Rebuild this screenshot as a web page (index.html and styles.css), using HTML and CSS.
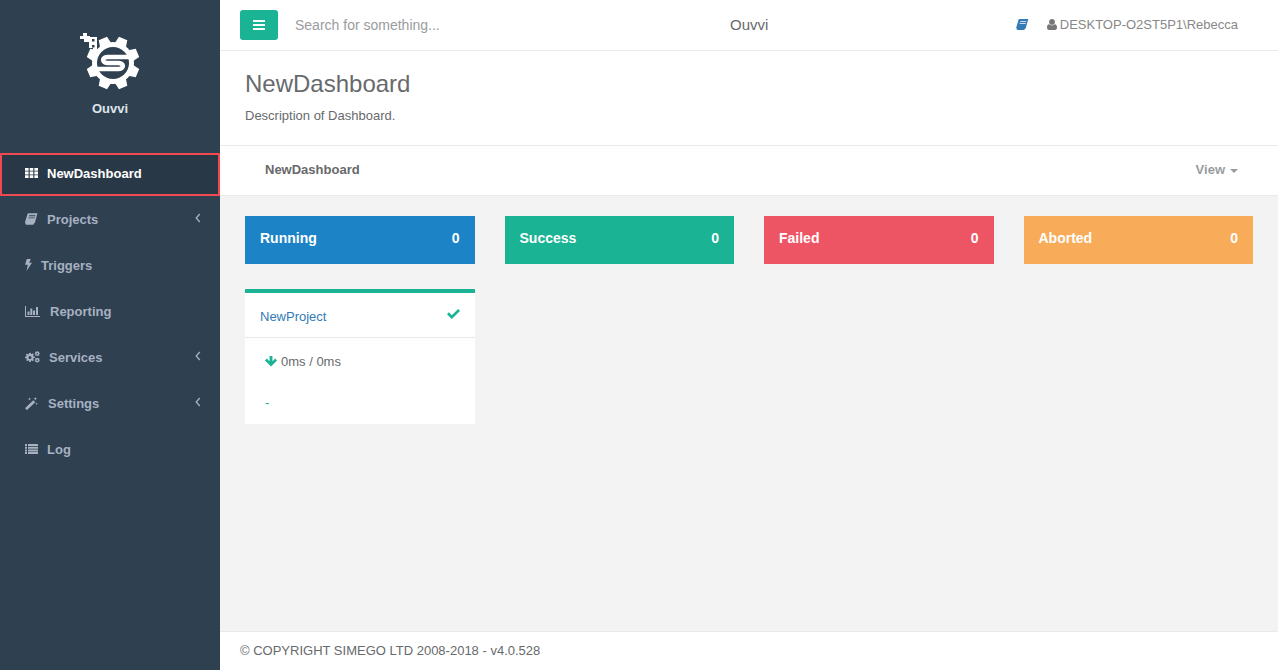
FILE: index.html
```html
<!DOCTYPE html>
<html lang="en">
<head>
<meta charset="utf-8">
<title>Ouvvi</title>
<link rel="stylesheet" href="styles.css">
</head>
<body>
<svg class="defs" width="0" height="0" aria-hidden="true">
  <defs>
    <symbol id="i-book" viewBox="0 0 16 14"><path d="M4 0h11.500l-.6 1.500-2.600 9.700c-.2.800-.7 1.300-1.600 1.300H1.800C.7 12.500 0 11.700.1 10.600c0-.5.2-1 .4-1.400L3 1C3.300.4 3.500 0 4 0zM5.300 2.500l-.3 1h7.500l.3-1zM4.500 5l-.3 1H12l.3-1zM1.900 11.100c-.3.500.1.900.7.900h8.500l-.3 1.100c-.1.500-.5.900-1.100.900H2.200C.9 14 .2 13 .4 11.800z"/></symbol>
    <symbol id="i-cog" viewBox="-10 -10 20 20"><path fill-rule="evenodd" d="M-1.500-10h3l.5 2.700 1.400.6 2.300-1.600 2.100 2.100-1.600 2.300.6 1.400 2.700.5v3l-2.700.5-.6 1.400 1.600 2.300-2.100 2.100-2.300-1.600-1.400.6-.5 2.700h-3l-.5-2.700-1.400-.6-2.300 1.600-2.100-2.100 1.600-2.300-.6-1.400L-10 1.500v-3l2.700-.5.6-1.400-1.600-2.300 2.100-2.100 2.300 1.600 1.400-.6zM0-3a3 3 0 1 0 0 6 3 3 0 1 0 0-6z"/></symbol>
  </defs>
</svg>
<div class="app">
  <aside class="sidebar">
    <div class="brand">
      <svg class="logo" viewBox="0 0 64 62" aria-hidden="true">
        <g fill="#fff">
          <g transform="translate(35 35)">
            <circle r="21"/>
            <g transform="rotate(22.5)">
              <path d="M-6-19L-4.500-26.500H4.500L6-19z"/>
              <path d="M-6-19L-4.500-26.500H4.500L6-19z" transform="rotate(45)"/>
              <path d="M-6-19L-4.500-26.500H4.500L6-19z" transform="rotate(90)"/>
              <path d="M-6-19L-4.500-26.500H4.500L6-19z" transform="rotate(135)"/>
              <path d="M-6-19L-4.500-26.500H4.500L6-19z" transform="rotate(180)"/>
              <path d="M-6-19L-4.500-26.500H4.500L6-19z" transform="rotate(225)"/>
              <path d="M-6-19L-4.500-26.500H4.500L6-19z" transform="rotate(270)"/>
              <path d="M-6-19L-4.500-26.500H4.500L6-19z" transform="rotate(315)"/>
            </g>
            <circle r="16" fill="#2f4050"/>
            <path class="logo-s" d="M17-6H-5C-11.500-6-11.500 0-5 0H5C11.500 0 11.500 6 5 6H-17"/>
          </g>
          <path d="M5 5h4v3h3v1h7v14h-4v-3h-4v-6H6v-3H2V8h3z"/>
        </g>
        <g fill="#2f4050"><rect x="14" y="11" width="2.500" height="2.500"/><rect x="14" y="17" width="2.500" height="2.500"/></g>
      </svg>
      <div class="brand-name">Ouvvi</div>
    </div>
    <nav>
      <ul class="menu">
        <li class="menu-item active"><a class="menu-link" href="#">
          <svg class="ico ico-th" viewBox="0 0 13 10" aria-hidden="true"><path d="M0 0h3.600v2.800H0zM4.700 0h3.600v2.800H4.700zM9.400 0H13v2.800H9.400zM0 3.600h3.600v2.800H0zM4.700 3.600h3.600v2.800H4.700zM9.400 3.600H13v2.800H9.400zM0 7.200h3.600V10H0zM4.700 7.200h3.600V10H4.700zM9.400 7.200H13V10H9.400z"/></svg>
          <span class="gap-th">NewDashboard</span></a></li>
        <li class="menu-item"><a class="menu-link" href="#">
          <svg class="ico ico-book"><use href="#i-book"/></svg>
          <span class="gap-book">Projects</span>
          <svg class="chev" viewBox="0 0 6 10" aria-hidden="true"><path d="M4.800 1L1.200 5l3.600 4" fill="none" stroke="currentColor" stroke-width="1.300"/></svg></a></li>
        <li class="menu-item"><a class="menu-link" href="#">
          <svg class="ico ico-bolt" viewBox="0 0 7 12" aria-hidden="true"><path d="M1.800 0h4L4.200 3.700H7L1.500 12l1.300-6.300H0z"/></svg>
          <span class="gap-bolt">Triggers</span></a></li>
        <li class="menu-item"><a class="menu-link" href="#">
          <svg class="ico ico-chart" viewBox="0 0 15 11" aria-hidden="true"><path d="M0 0h1v10h14v1H0zM2.500 5.500h2V9h-2zM5.300 2.500h2V9h-2zM8 4.500h2V9H8zM11 1h2v8h-2z"/></svg>
          <span class="gap-chart">Reporting</span></a></li>
        <li class="menu-item"><a class="menu-link" href="#">
          <svg class="ico ico-cogs" viewBox="0 0 15 12" aria-hidden="true"><svg x="0" y="1.500" width="10" height="10" viewBox="-10 -10 20 20"><use href="#i-cog" x="-10" y="-10" width="20" height="20"/></svg><svg x="9.500" y="0" width="5.500" height="5.500" viewBox="-10 -10 20 20"><use href="#i-cog" x="-10" y="-10" width="20" height="20"/></svg><svg x="9.500" y="6.500" width="5.500" height="5.500" viewBox="-10 -10 20 20"><use href="#i-cog" x="-10" y="-10" width="20" height="20"/></svg></svg>
          <span class="gap-cogs">Services</span>
          <svg class="chev" viewBox="0 0 6 10" aria-hidden="true"><path d="M4.800 1L1.200 5l3.600 4" fill="none" stroke="currentColor" stroke-width="1.300"/></svg></a></li>
        <li class="menu-item"><a class="menu-link" href="#">
          <svg class="ico ico-wand" viewBox="0 0 13 13" aria-hidden="true"><path d="M0 11.200L8.300 3.200l2 2L2 13zM10.300 0l.6 1.300 1.300.5-1.300.5-.6 1.300-.5-1.300-1.300-.5 1.300-.5zM4.500.5l.5 1.100 1.100.4-1.100.5-.5 1.100-.4-1.100L3 2l1.100-.4zM11.500 5.500l.4.9.9.4-.9.4-.4.900-.4-.9-.9-.4.900-.4z"/></svg>
          <span class="gap-wand">Settings</span>
          <svg class="chev" viewBox="0 0 6 10" aria-hidden="true"><path d="M4.800 1L1.200 5l3.600 4" fill="none" stroke="currentColor" stroke-width="1.300"/></svg></a></li>
        <li class="menu-item"><a class="menu-link" href="#">
          <svg class="ico ico-list" viewBox="0 0 13 10" aria-hidden="true"><path d="M0 0h2v2H0zM3 0h10v2H3zM0 2.700h2v2H0zM3 2.700h10v2H3zM0 5.400h2v2H0zM3 5.400h10v2H3zM0 8h2v2H0zM3 8h10v2H3z"/></svg>
          <span class="gap-th">Log</span></a></li>
      </ul>
    </nav>
  </aside>
  <div class="main">
    <header class="topbar">
      <button class="toggle" type="button" aria-label="Toggle menu">
        <svg viewBox="0 0 12 10" aria-hidden="true"><path d="M0 0h12v2H0zM0 4h12v2H0zM0 8h12v2H0z"/></svg>
      </button>
      <input class="search" type="text" placeholder="Search for something...">
      <div class="top-title">Ouvvi</div>
      <div class="top-links">
        <svg class="top-book"><use href="#i-book"/></svg>
        <span class="user">
          <svg class="top-user" viewBox="0 0 10 11" aria-hidden="true"><path d="M5 0a2.900 2.900 0 1 1 0 5.800A2.900 2.900 0 0 1 5 0zM2 5.300C2.800 6 3.800 6.500 5 6.500s2.200-.5 3-1.200c1.300.2 2 1.300 2 3.200 0 1.500-.8 2.500-2 2.500H2c-1.200 0-2-1-2-2.500 0-1.900.7-3 2-3.200z"/></svg>
          DESKTOP-O2ST5P1\Rebecca
        </span>
      </div>
    </header>
    <section class="page-heading">
      <h2 class="page-title">NewDashboard</h2>
      <p class="page-desc">Description of Dashboard.</p>
    </section>
    <div class="subnav">
      <a class="subnav-link" href="#">NewDashboard</a>
      <a class="subnav-view" href="#">View<span class="caret"></span></a>
    </div>
    <main class="content">
      <div class="grid tiles">
        <div class="tile tile-blue"><span>Running</span><span>0</span></div>
        <div class="tile tile-green"><span>Success</span><span>0</span></div>
        <div class="tile tile-red"><span>Failed</span><span>0</span></div>
        <div class="tile tile-orange"><span>Aborted</span><span>0</span></div>
      </div>
      <div class="grid">
        <article class="card">
          <div class="card-head">
            <a class="card-link" href="#">NewProject</a>
            <svg class="check" viewBox="0 0 13 10" aria-hidden="true"><path d="M4.800 10L0 5.200l1.900-1.900 2.900 2.900L11.100 0 13 1.900z"/></svg>
          </div>
          <div class="card-body">
            <div class="timing">
              <svg class="arrow" viewBox="0 0 12 11" aria-hidden="true"><path d="M4.600 0h2.800v5.300l2.800-2.800L12 4.400 6 10.600 0 4.400l1.800-1.900 2.800 2.800z"/></svg>
              0ms / 0ms
            </div>
            <div class="dash">-</div>
          </div>
        </article>
      </div>
    </main>
    <footer class="footer">© COPYRIGHT SIMEGO LTD 2008-2018 - v4.0.528</footer>
  </div>
</div>
</body>
</html>
```

FILE: styles.css
```css
* { box-sizing: border-box; }
html, body { height: 100%; }
body {
  margin: 0;
  font-family: "Liberation Sans", Arial, sans-serif;
  font-size: 13px;
  color: #676a6c;
  background: #2f4050;
}
a { text-decoration: none; }
.defs { display: block; height: 0; width: 0; overflow: hidden; }
.app { display: flex; height: 670px; overflow: hidden; }

.sidebar { width: 220px; flex: none; background: #2f4050; }
.brand { height: 150px; display: flex; flex-direction: column; align-items: center; padding-top: 28px; }
.logo { width: 64px; height: 62px; fill: #fff; }
.logo-s { fill: none; stroke: #fff; stroke-width: 4.500; }
.brand-name { margin-top: 10px; font-weight: 700; color: #dfe4ed; line-height: 18px; }
.menu { list-style: none; margin: 0; padding: 0; }
.menu-item { height: 46px; display: flex; align-items: center; }
.menu-link {
  flex: 1;
  display: flex;
  align-items: center;
  height: 46px;
  padding: 0 20px 0 25px;
  font-weight: 700;
  color: #a7b1c2;
  fill: #a7b1c2;
}
.menu-item.active { align-items: flex-end; }
.menu-item.active .menu-link {
  height: 43px;
  background: #293846;
  border: 2px solid #f04a50;
  padding-left: 23px;
  padding-bottom: 3px;
  color: #fff;
  fill: #fff;
}
.ico { display: block; flex: none; }
.ico-th { width: 13px; height: 10px; }
.ico-book { width: 13px; height: 12px; }
.ico-bolt { width: 7px; height: 12px; }
.ico-chart { width: 15px; height: 11px; }
.ico-cogs { width: 15px; height: 12px; }
.ico-wand { width: 13px; height: 13px; }
.ico-list { width: 13px; height: 10px; }
.gap-th { margin-left: 9px; }
.gap-book { margin-left: 9px; }
.gap-bolt { margin-left: 9px; }
.gap-chart { margin-left: 10px; }
.gap-cogs { margin-left: 9px; }
.gap-wand { margin-left: 10px; }
.chev { width: 6px; height: 10px; margin-left: auto; margin-bottom: 3px; margin-right: -1px; }

.main { flex: 1; min-width: 0; display: flex; flex-direction: column; background: #f3f3f4; }
.topbar {
  height: 51px;
  flex: none;
  display: flex;
  align-items: center;
  background: #fff;
  border-bottom: 1px solid #e7eaec;
  padding: 0 40px 1px 20px;
  position: relative;
}
.toggle {
  width: 38px;
  height: 30px;
  padding: 0;
  border: 0;
  border-radius: 3px;
  background: #1ab394;
  display: flex;
  align-items: center;
  justify-content: center;
}
.toggle svg { width: 12px; height: 10px; fill: #fff; }
.search {
  margin-left: 17px;
  width: 300px;
  border: 0;
  outline: 0;
  padding: 0;
  font: 14px "Liberation Sans", Arial, sans-serif;
  color: #676a6c;
}
.search::placeholder { color: #999c9e; opacity: 1; }
.top-title { position: absolute; left: 510px; font-size: 15px; line-height: 20px; top: 15px; }
.top-links { margin-left: auto; display: flex; align-items: center; color: #888; }
.top-book { width: 13px; height: 11px; fill: #337ab7; }
.user { display: flex; align-items: center; margin-left: 18px; gap: 3px; color: #888; }
.top-user { width: 10px; height: 11px; fill: #777; }

.page-heading { height: 95px; flex: none; background: #fff; border-bottom: 1px solid #e7eaec; padding: 20px 25px 0; }
.page-title { margin: 0; font-size: 24px; font-weight: 400; line-height: 26px; color: #676a6c; }
.page-desc { margin: 11px 0 0; line-height: 16px; font-size: 13px; }
.subnav {
  height: 50px;
  flex: none;
  display: flex;
  align-items: center;
  justify-content: space-between;
  background: #fff;
  border-bottom: 1px solid #e7eaec;
  padding: 0 40px 2px 45px;
  font-weight: 700;
}
.subnav-link { color: #676a6c; }
.subnav-view { color: #999c9e; display: flex; align-items: center; }
.caret { margin-left: 5px; margin-top: 2px; border: 4px solid transparent; border-top-color: #999c9e; border-bottom: 0; }

.content { flex: 1; min-height: 0; padding: 20px 25px; }
.grid { display: grid; grid-template-columns: repeat(4, 1fr); column-gap: 30px; }
.tiles { margin-bottom: 25px; }
.tile {
  height: 48px;
  padding: 0 15px 5px;
  display: flex;
  align-items: center;
  justify-content: space-between;
  font-size: 14px;
  font-weight: 700;
  color: #fff;
}
.tile-blue { background: #1c84c6; }
.tile-green { background: #1ab394; }
.tile-red { background: #ed5565; }
.tile-orange { background: #f8ac59; }
.card { background: #fff; border-top: 4px solid #1ab394; height: 135px; }
.card-head {
  height: 45px;
  display: flex;
  align-items: center;
  justify-content: space-between;
  padding: 2px 15px 0;
  border-bottom: 1px solid #e7eaec;
}
.card-link { color: #337ab7; }
.check { width: 13px; height: 10px; fill: #1ab394; margin-bottom: 4px; }
.card-body { padding: 16px 20px 0; }
.timing { display: flex; align-items: center; gap: 4px; line-height: 16px; }
.arrow { width: 12px; height: 11px; fill: #1ab394; margin-bottom: 1px; }
.dash { margin-top: 25px; line-height: 16px; color: #1ab394; }
.footer {
  height: 39px;
  flex: none;
  background: #fff;
  border-top: 1px solid #e7eaec;
  padding: 11px 20px 0;
  font-size: 13px;
  line-height: 16px;
}
```
